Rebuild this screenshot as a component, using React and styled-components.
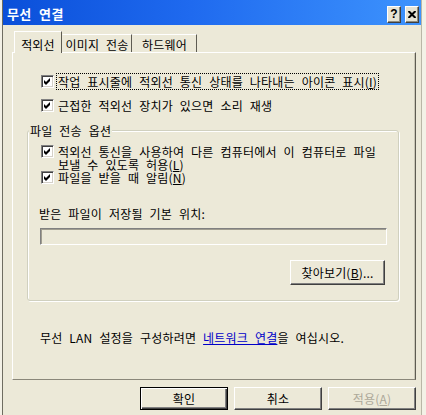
import styled, { createGlobalStyle } from 'styled-components';

const GlobalStyle = createGlobalStyle`
  html, body {
    margin: 0;
    padding: 0;
  }

  body {
    background: #f3f1e6;
    font-family: "Noto Sans CJK KR", "Noto Sans", sans-serif;
    font-size: 12px;
    letter-spacing: 0.2px;
    word-spacing: 4px;
    color: #000;
  }
`;

const Window = styled.div`
  width: 418px;
  height: 415px;
  margin-left: 2px;
  border-left: 1px solid #6f6d61;
  border-right: 1px solid #b9b6a6;
  background: #ece9d8;
  display: flex;
  flex-direction: column;
  overflow: hidden;
`;

const TitleBar = styled.div`
  height: 25px;
  box-sizing: border-box;
  padding: 3px 2px 0 4px;
  display: flex;
  align-items: center;
  justify-content: space-between;
  background: linear-gradient(to right, #0a4fd9 0%, #1f6aef 45%, #3d93fd 100%);
`;

const Title = styled.span`
  color: #fff;
  font-weight: bold;
  font-size: 13px;
  line-height: 16px;
  letter-spacing: 0.4px;
`;

const CaptionButtons = styled.div`
  display: flex;
  gap: 4px;
`;

const CaptionButton = styled.div`
  width: 14px;
  height: 17px;
  box-sizing: border-box;
  display: flex;
  align-items: center;
  justify-content: center;
  background: #e6e3d3;
  border: 1px solid;
  border-color: #fff #404040 #404040 #fff;
  box-shadow: inset -1px -1px 0 #8f8c7e;
  font-family: "Liberation Sans", sans-serif;
  font-weight: bold;
  font-size: 12px;
  line-height: 1;
`;

const Body = styled.div`
  flex: 1;
  display: flex;
  flex-direction: column;
  padding: 6px 4px 0 9px;
`;

const TabRow = styled.div`
  display: flex;
  align-items: flex-end;
  height: 21px;
  padding-left: 2px;
`;

const Tab = styled.div`
  position: relative;
  z-index: ${(p) => (p.$active ? 1 : 0)};
  width: ${(p) => p.$width}px;
  height: ${(p) => (p.$active ? 22 : 18)}px;
  margin-bottom: ${(p) => (p.$active ? -1 : 0)}px;
  box-sizing: border-box;
  padding-top: ${(p) => (p.$active ? 6 : 3)}px;
  text-align: center;
  line-height: 13px;
  white-space: nowrap;
  background: #ece9d8;
  border-top: 1px solid #fff;
  border-left: 1px solid ${(p) => (p.$active ? '#fff' : 'transparent')};
  border-right: 1px solid #5e5c52;
`;

const Panel = styled.div`
  width: 404px;
  height: 328px;
  box-sizing: border-box;
  padding: 22px 16px 0 14px;
  display: flex;
  flex-direction: column;
  border: 1px solid;
  border-color: #fff #5e5c52 #8a877a #fff;
  box-shadow: inset -1px 0 0 #c9c6b6;
`;

const CheckRow = styled.div`
  display: flex;
  align-items: flex-start;
  gap: 4px;
  margin-top: ${(p) => p.$top || 0}px;
  margin-left: ${(p) => p.$left || 0}px;
`;

const Box = styled.div`
  flex: none;
  width: 13px;
  height: 13px;
  box-sizing: border-box;
  background: #fff;
  border: 1px solid;
  border-color: #808080 #fff #fff #808080;
  box-shadow: inset 1px 1px 0 #404040, inset -1px -1px 0 #d4d0c8;
  display: flex;
  align-items: center;
  justify-content: center;
`;

const Label = styled.span`
  line-height: 13px;
  white-space: nowrap;
  outline: ${(p) => (p.$focus ? '1px dotted #000' : 'none')};
  outline-offset: 1px;
`;

const GroupBox = styled.div`
  margin-top: 18px;
  border: 1px solid #d0d0bf;
  border-radius: 3px;
  box-shadow: inset 1px 1px 0 #fff, 1px 1px 0 #fff;
  padding: 0 11px 15px 12px;
  display: flex;
  flex-direction: column;
`;

const GroupTitle = styled.span`
  align-self: flex-start;
  margin: -7px 0 0 -11px;
  padding: 0 1px;
  background: #ece9d8;
  line-height: 13px;
`;

const Caption = styled.div`
  margin: 23px 0 0 -1px;
  line-height: 13px;
`;

const PathField = styled.div`
  margin-top: 8px;
  height: 17px;
  box-sizing: border-box;
  background: #ece9d8;
  border: 1px solid;
  border-color: #808080 #fff #fff #808080;
  box-shadow: inset 1px 1px 0 #a09d90;
`;

const Button = styled.button`
  width: ${(p) => p.$width || 88}px;
  height: ${(p) => p.$height || 23}px;
  box-sizing: border-box;
  padding: 0;
  font-family: inherit;
  font-size: 12px;
  letter-spacing: inherit;
  word-spacing: 2px;
  color: ${(p) => (p.disabled ? '#aca899' : '#000')};
  background: #ece9d8;
  border: 1px solid;
  border-color: ${(p) => (p.$default ? '#000' : '#fff #404040 #404040 #fff')};
  box-shadow: ${(p) => (p.$default
    ? 'inset 1px 1px 0 #fff, inset -1px -1px 0 #404040, inset -2px -2px 0 #808080'
    : 'inset -1px -1px 0 #808080')};
`;

const BrowseButton = styled(Button)`
  align-self: flex-end;
  margin: 15px 2px 0 0;
`;

const Footer = styled.div`
  margin: 30px 0 0 13px;
  line-height: 13px;
`;

const Link = styled.span`
  color: #0000c8;
  text-decoration: underline;
`;

const ButtonRow = styled.div`
  display: flex;
  justify-content: flex-end;
  gap: 6px;
  margin-top: 7px;
  padding-right: 1px;
`;

function Check() {
  return (
    <Box>
      <svg width="7" height="7" viewBox="0 0 7 7">
        <path d="M0 2 L2 4 L6 0 L6 3 L2 7 L0 5 Z" fill="#000" />
      </svg>
    </Box>
  );
}

export default function App() {
  return (
    <>
      <GlobalStyle />
      <Window>
        <TitleBar>
          <Title>무선 연결</Title>
          <CaptionButtons>
            <CaptionButton>?</CaptionButton>
            <CaptionButton>
              <svg width="8" height="7" viewBox="0 0 8 7">
                <path d="M0.5 0 L7.5 7 M7.5 0 L0.5 7" stroke="#000" strokeWidth="2" />
              </svg>
            </CaptionButton>
          </CaptionButtons>
        </TitleBar>
        <Body>
          <TabRow>
            <Tab $active $width={48}>적외선</Tab>
            <Tab $width={70}>이미지 전송</Tab>
            <Tab $width={65}>하드웨어</Tab>
          </TabRow>
          <Panel>
            <CheckRow $left={14}>
              <Check />
              <Label $focus>
                작업 표시줄에 적외선 통신 상태를 나타내는 아이콘 표시(<u>I</u>)
              </Label>
            </CheckRow>
            <CheckRow $left={14} $top={11}>
              <Check />
              <Label>근접한 적외선 장치가 있으면 소리 재생</Label>
            </CheckRow>
            <GroupBox>
              <GroupTitle>파일 전송 옵션</GroupTitle>
              <CheckRow $left={1} $top={8}>
                <Check />
                <Label>
                  적외선 통신을 사용하여 다른 컴퓨터에서 이 컴퓨터로 파일
                  <br />
                  보낼 수 있도록 허용(<u>L</u>)
                </Label>
              </CheckRow>
              <CheckRow $left={1} $top={0}>
                <Check />
                <Label>
                  파일을 받을 때 알림(<u>N</u>)
                </Label>
              </CheckRow>
              <Caption>받은 파일이 저장될 기본 위치:</Caption>
              <PathField />
              <BrowseButton type="button" $width={95} $height={25}>
                찾아보기(<u>B</u>)...
              </BrowseButton>
            </GroupBox>
            <Footer>
              무선 LAN 설정을 구성하려면 <Link>네트워크 연결</Link>을 여십시오.
            </Footer>
          </Panel>
          <ButtonRow>
            <Button type="button" $default>확인</Button>
            <Button type="button">취소</Button>
            <Button type="button" disabled>
              적용(<u>A</u>)
            </Button>
          </ButtonRow>
        </Body>
      </Window>
    </>
  );
}
